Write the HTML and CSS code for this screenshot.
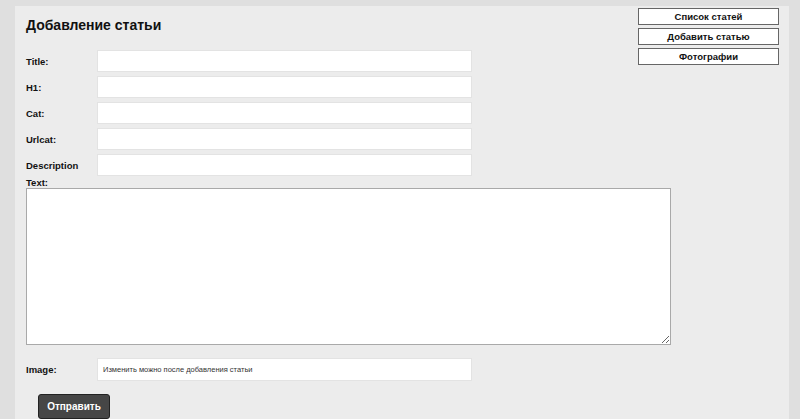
FILE: index.html
```html
<!DOCTYPE html>
<html lang="ru">
<head>
    <meta charset="UTF-8">
    <title>Добавление статьи</title>
    <link rel="stylesheet" href="styles.css">
</head>
<body>
    <div class="page">
        <div class="panel">
            <div class="nav">
                <a href="#" class="nav-link">Список статей</a>
                <a href="#" class="nav-link">Добавить статью</a>
                <a href="#" class="nav-link">Фотографии</a>
            </div>

            <h1>Добавление статьи</h1>

            <form class="article-form">
                <div class="row">
                    <label>Title:</label>
                    <input type="text" class="field">
                </div>
                <div class="row">
                    <label>H1:</label>
                    <input type="text" class="field">
                </div>
                <div class="row">
                    <label>Cat:</label>
                    <input type="text" class="field">
                </div>
                <div class="row">
                    <label>Urlcat:</label>
                    <input type="text" class="field">
                </div>
                <div class="row">
                    <label>Description</label>
                    <input type="text" class="field">
                </div>

                <label class="text-label">Text:</label>
                <textarea class="text-area"></textarea>

                <div class="row image-row">
                    <label>Image:</label>
                    <input type="text" class="field small" value="Изменить можно после добавления статьи">
                </div>

                <button type="submit" class="submit">Отправить</button>
            </form>
        </div>
    </div>
</body>
</html>
```

FILE: styles.css
```css
* {
    margin: 0;
    padding: 0;
    box-sizing: border-box;
}

body {
    font-family: "Liberation Sans", Arial, sans-serif;
    background: #dfdfdf;
    color: #111;
    height: 419px;
    overflow: hidden;
}

.page {
    padding: 6px 11px 0 15px;
}

.panel {
    background: #ececec;
    padding: 2px 10px 0 11px;
    min-height: 413px;
}

/* right-hand menu */
.nav {
    float: right;
    width: 141px;
    display: flex;
    flex-direction: column;
    gap: 3px;
}

.nav-link {
    display: block;
    height: 17px;
    line-height: 15px;
    background: #fff;
    border: 1px solid #666;
    color: #111;
    text-decoration: none;
    text-align: center;
    font-size: 9.5px;
    font-weight: bold;
}

h1 {
    font-size: 14px;
    line-height: 18px;
    font-weight: bold;
    padding-top: 8px;
    margin-bottom: 16px;
}

.row {
    display: flex;
    align-items: center;
    margin-bottom: 4px;
}

.row label {
    width: 71px;
    font-size: 9.5px;
    font-weight: bold;
}

.field {
    width: 375px;
    height: 22px;
    background: #fff;
    border: 1px solid #e3e3e3;
    font-family: inherit;
    font-size: 10px;
    padding: 0 5px;
}

.field.small {
    height: 23px;
    font-size: 7.5px;
    color: #333;
}

.text-label {
    display: block;
    font-size: 9.5px;
    font-weight: bold;
    margin-top: -2px;
    line-height: 10px;
}

.text-area {
    display: block;
    width: 645px;
    height: 157px;
    border: 1px solid #a9a9a9;
    background: #fff;
    margin-bottom: 13px;
}

.image-row {
    margin-bottom: 13px;
}

.submit {
    margin-left: 12px;
    width: 72px;
    height: 25px;
    background: #464646;
    border: 1px solid #222;
    border-radius: 3px;
    color: #fff;
    font-family: inherit;
    font-size: 10px;
    font-weight: bold;
}
```
